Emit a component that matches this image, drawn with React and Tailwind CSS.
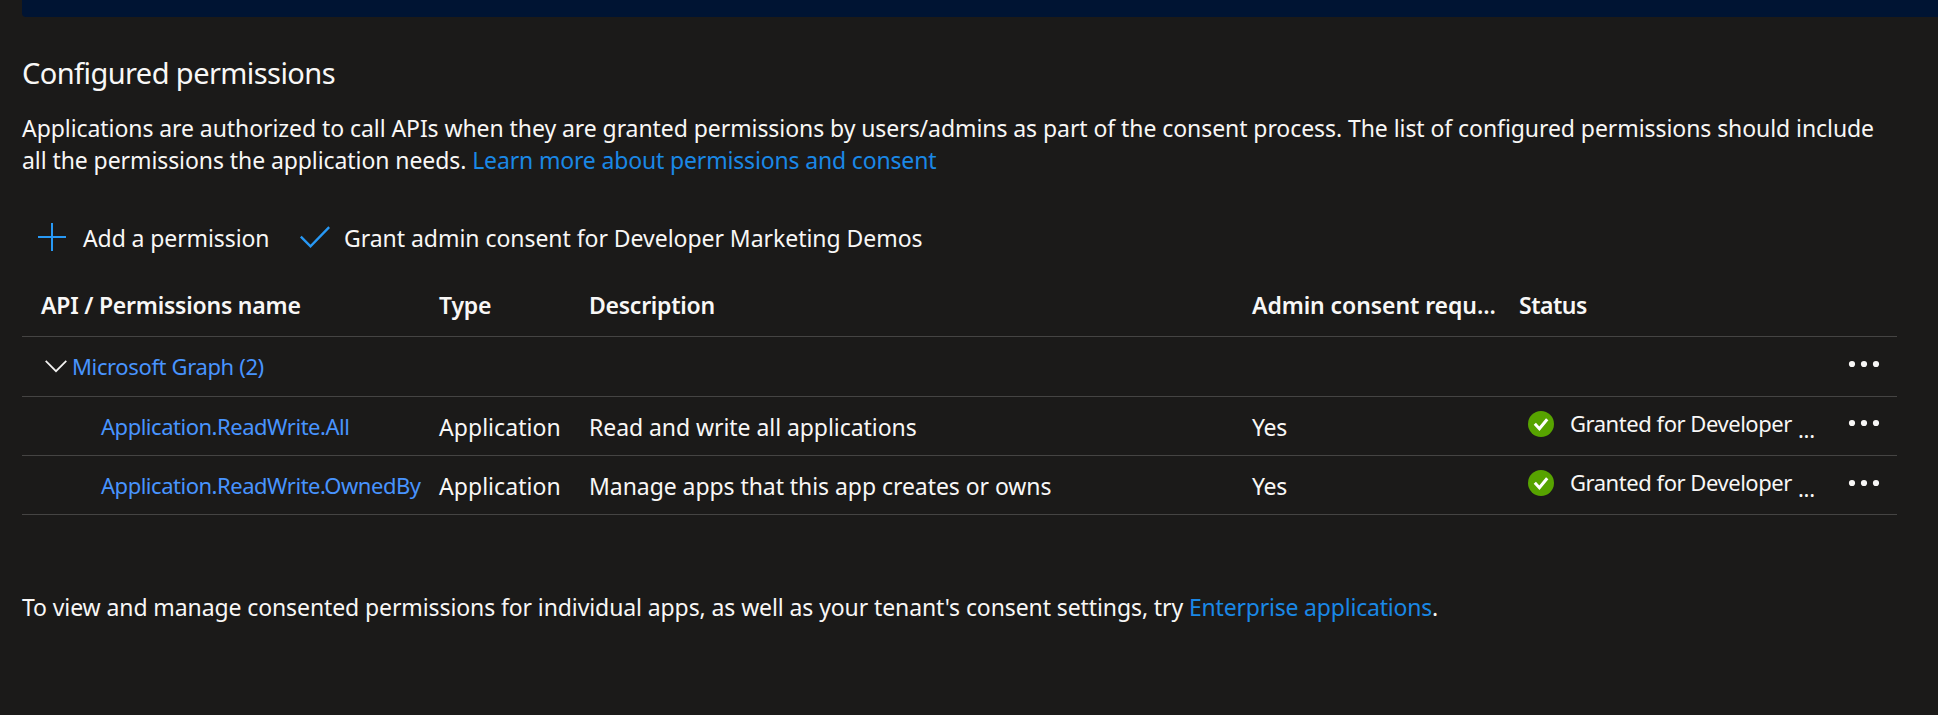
const rows = [
  {
    name: "Application.ReadWrite.All",
    type: "Application",
    description: "Read and write all applications",
    consent: "Yes",
    status: "Granted for Developer",
    menuOffset: "mt-[22px]",
  },
  {
    name: "Application.ReadWrite.OwnedBy",
    type: "Application",
    description: "Manage apps that this app creates or owns",
    consent: "Yes",
    status: "Granted for Developer",
    menuOffset: "mt-[23px]",
  },
];

function Dots() {
  return (
    <svg width="32" height="8" viewBox="0 0 32 8" fill="#f7f6f5">
      <circle cx="4" cy="4" r="3.1" />
      <circle cx="16" cy="4" r="3.1" />
      <circle cx="28" cy="4" r="3.1" />
    </svg>
  );
}

function PlusIcon() {
  return (
    <svg width="28" height="28" viewBox="0 0 28 28" stroke="#2899f5" strokeWidth="2" fill="none">
      <path d="M14 0V28M0 14H28" />
    </svg>
  );
}

function CheckIcon() {
  return (
    <svg width="30" height="22" viewBox="0 0 30 22" stroke="#2899f5" strokeWidth="2.4" fill="none">
      <path d="M0.8 10.6L10.5 20.3L29.2 1.2" />
    </svg>
  );
}

function ChevronIcon() {
  return (
    <svg width="22" height="13" viewBox="0 0 22 13" stroke="#f3f2f1" strokeWidth="1.7" fill="none">
      <path d="M0.7 0.8L11 11.2L21.3 0.8" />
    </svg>
  );
}

function GrantedIcon() {
  return (
    <svg width="26" height="26" viewBox="0 0 26 26" fill="none">
      <circle cx="13" cy="13" r="13" fill="#57a300" />
      <path d="M6.8 12.8L11.4 17.8L19.2 8.2" stroke="#fff" strokeWidth="3" />
    </svg>
  );
}

const columns = "grid grid-cols-[417px_150px_663px_267px_320px_1fr] border-b border-[#454443]";

export default function App() {
  return (
    <div className="h-[715px] w-[1938px] overflow-hidden bg-[#1b1a19] font-['Noto_Sans','Open_Sans',sans-serif] text-[23px] leading-[32px] whitespace-nowrap text-[#f8f7f6]">
      <div className="ml-[22px] h-[17px] rounded-bl-[4px] bg-[#001433]" />
      <main className="ml-[22px] w-[1875px]">
        <h1 className="pt-[36px] text-[29px] leading-[40px] tracking-[-0.57px]">Configured permissions</h1>
        <p className="mt-[19px] tracking-[-0.07px]">
          Applications are authorized to call APIs when they are granted permissions by users/admins as part of the consent process. The list of configured permissions should include
          <br />
          <span className="tracking-[-0.08px]">all the permissions the application needs. </span>
          <a className="tracking-[-0.16px] text-[#1a88e6]">Learn more about permissions and consent</a>
        </p>

        <div className="mt-[45px] flex h-[34px] items-center pl-[16px]">
          <div className="-mt-[2px]"><PlusIcon /></div>
          <span className="ml-[17px] w-[217px] tracking-[-0.1px]">Add a permission</span>
          <div className="-mt-[2px]"><CheckIcon /></div>
          <span className="ml-[14px] tracking-[-0.04px]">Grant admin consent for Developer Marketing Demos</span>
        </div>

        <section>
          <div className={`${columns} mt-[26px] h-[56px] pt-[8px] font-semibold`}>
            <span className="pl-[19px] tracking-[-0.22px]">API / Permissions name</span>
            <span className="tracking-[-0.2px]">Type</span>
            <span className="tracking-[-0.26px]">Description</span>
            <span className="tracking-[-0.08px]">Admin consent requ...</span>
            <span className="tracking-[-0.5px]">Status</span>
          </div>
          <div className="flex h-[60px] items-start border-b border-[#454443] pl-[23px]">
            <div className="mt-[23px]"><ChevronIcon /></div>
            <a className="mt-[13px] ml-[5px] grow text-[22px] tracking-[-0.37px] text-[#4894fe]">Microsoft Graph (2)</a>
            <div className="mt-[23px] mr-[17px]"><Dots /></div>
          </div>
          {rows.map((row) => (
            <div key={row.name} className={`${columns} h-[59px]`}>
              <a className="mt-[13px] ml-[79px] h-[32px] text-[22px] tracking-[-0.48px] text-[#4894fe]">{row.name}</a>
              <span className="pt-[14px] tracking-[0.05px]">{row.type}</span>
              <span className="pt-[14px] tracking-[-0.06px]">{row.description}</span>
              <span className="pt-[14px] tracking-[-0.3px]">{row.consent}</span>
              <div className="flex items-start pl-[9px]">
                <div className="mt-[14px]"><GrantedIcon /></div>
                <span className="mt-[10px] ml-[16px] w-[228px] text-[22px] tracking-[-0.46px]">{row.status}</span>
                <span className="mt-[16px] text-[22px] tracking-[-0.3px]">...</span>
              </div>
              <div className={`${row.menuOffset} ml-[9px]`}><Dots /></div>
            </div>
          ))}
        </section>

        <p className="mt-[76px] tracking-[-0.1px]">
          To view and manage consented permissions for individual apps, as well as your tenant's consent settings, try{" "}
          <a className="tracking-[-0.2px] text-[#1a88e6]">Enterprise applications</a>.
        </p>
      </main>
    </div>
  );
}
